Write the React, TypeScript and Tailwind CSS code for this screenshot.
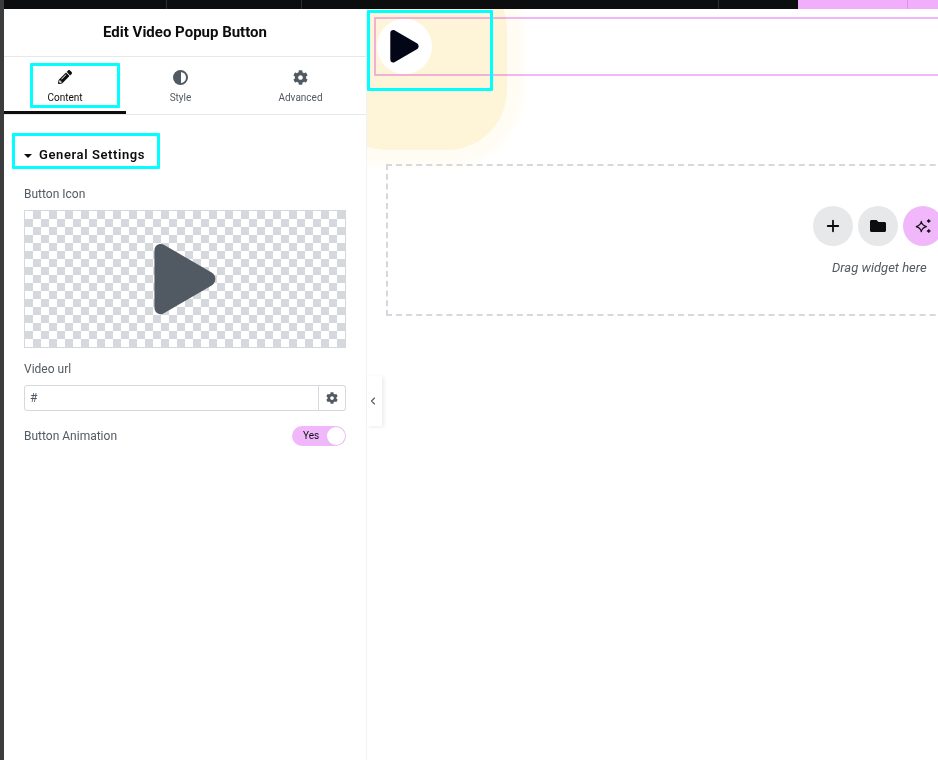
import { ChevronLeft, Plus } from 'lucide-react';
import { FaCog, FaFolder, FaPencilAlt } from 'react-icons/fa';

function Play({ className }: { className?: string }) {
  return (
    <svg viewBox="0 0 62 72" className={className} fill="currentColor">
      <path d="M0 7C0 1.5 5-1.5 10 1l48 28c5 3 5 10 0 13L10 70c-5 3-10 0-10-6z" />
    </svg>
  );
}

function Sparkle({ className }: { className?: string }) {
  return (
    <svg viewBox="0 0 16 16" className={className}>
      <path d="M6.300 3.400C6.800 6.400 7.900 7.700 11.400 8.600 7.900 9.500 6.800 10.800 6.300 13.800 5.800 10.800 4.700 9.500 1.200 8.600 4.700 7.700 5.800 6.400 6.300 3.400z" fill="none" stroke="currentColor" strokeWidth="1.100" strokeLinejoin="round" />
      <path d="M13.700 1.200v3.600M11.900 3h3.600M13.700 11.200v3.600M11.900 13h3.600" fill="none" stroke="currentColor" strokeWidth="1.300" />
    </svg>
  );
}

function Tab({ label, active, icon, width }: { label: string; active?: boolean; icon: React.ReactNode; width: string }) {
  return (
    <div className={`${width} flex flex-col items-center pt-[10px] border-b-[3px] ${active ? 'border-[#0c0d0e] text-[#0c0d0e]' : 'border-transparent text-[#515962]'}`}>
      <div className="h-[20px] flex items-center justify-center">{icon}</div>
      <span className="text-[10px] leading-[12px] mt-[5px]">{label}</span>
    </div>
  );
}

export default function App() {
  return (
    <div className="relative w-[938px] h-[760px] overflow-hidden flex bg-white font-['Roboto',sans-serif] text-[#515962]">
      <div className="w-[4px] bg-[#3c3c3c]" />

      <div className="flex-1 min-w-0 flex flex-col">
        {/* Top bar */}
        <div className="h-[9px] flex bg-[#0c0d0e]">
          <div className="w-[163px] border-r border-[#2d2f32]" />
          <div className="w-[135px] border-r border-[#2d2f32]" />
          <div className="w-[417px] border-r border-[#2d2f32]" />
          <div className="w-[79px]" />
          <div className="w-[110px] bg-[#f0aefb] border-r border-[#e08fee]" />
          <div className="flex-1 bg-[#f0aefb]" />
        </div>

        <div className="flex flex-1 min-h-0">
          {/* Panel */}
          <aside className="w-[363px] flex flex-col border-r border-[#f1f2f3] bg-white">
            <div className="h-[48px] flex items-center justify-center border-b border-[#e6e8ea]">
              <h1 className="text-[15px] font-bold text-[#0c0d0e]">Edit Video Popup Button</h1>
            </div>
            <div className="h-[58px] flex border-b border-[#e6e8ea]">
              <Tab width="w-[122px]" active label="Content" icon={<FaPencilAlt className="w-[14px] h-[14px]" />} />
              <Tab
                width="w-[109px]"
                label="Style"
                icon={
                  <span className="w-[15px] h-[15px] rounded-full border-2 border-[#515962] flex">
                    <span className="w-1/2 bg-[#515962]" />
                  </span>
                }
              />
              <Tab width="w-[131px]" label="Advanced" icon={<FaCog className="w-[15px] h-[15px]" />} />
            </div>

            <div className="px-[20px] pt-[30px]">
              <div className="flex items-center gap-[7px] text-[#0c0d0e]">
                <span className="w-0 h-0 border-x-[4px] border-x-transparent border-t-[4px] border-t-[#0c0d0e] mt-[2px]" />
                <span className="text-[13px] font-semibold tracking-[0.6px]">General Settings</span>
              </div>

              <div className="text-[12px] leading-[14px] mt-[22px]">Button Icon</div>
              <div className="mt-[9px] h-[138px] flex items-center justify-center border border-[#d5d8dc] bg-[repeating-conic-gradient(#d5d8dc_0_25%,#ffffff_0_50%)] bg-[length:16px_16px]">
                <Play className="w-[62px] h-[71px] mt-[1px] text-[#515962]" />
              </div>

              <div className="text-[12px] leading-[14px] mt-[14px]">Video url</div>
              <div className="mt-[9px] h-[26px] flex">
                <div className="flex-1 flex items-center px-[5px] border border-[#d5d8dc] rounded-l-[3px] text-[12px]">#</div>
                <div className="w-[27px] flex items-center justify-center border border-l-0 border-[#d5d8dc] rounded-r-[3px]">
                  <FaCog className="w-[12px] h-[12px]" />
                </div>
              </div>

              <div className="mt-[15px] flex items-center justify-between">
                <span className="text-[12px]">Button Animation</span>
                <div className="relative w-[54px] h-[20px] rounded-full bg-[#f0b8fb] flex items-center pl-[11px]">
                  <span className="text-[10px] text-[#0c0d0e]">Yes</span>
                  <span className="absolute right-[1px] top-[1px] w-[18px] h-[18px] rounded-full bg-white" />
                </div>
              </div>
            </div>
          </aside>

          {/* Preview */}
          <main className="relative flex-1 min-w-0 overflow-hidden bg-white">
            <div className="absolute -left-[40px] -top-[40px] w-[180px] h-[181px] rounded-[60px] bg-[#fef5d9] shadow-[0_0_10px_16px_#fffcf3]" />

            <div className="relative mt-[8px] ml-[7px] w-[600px] h-[59px] flex items-center pl-[3px]">
              <div className="absolute inset-0 border-2 border-[#f0b8fb] mix-blend-multiply" />
              <div className="w-[55px] h-[55px] rounded-full bg-white flex items-center justify-center">
                <Play className="w-[29px] h-[33px] text-[#020617]" />
              </div>
            </div>

            <div className="relative mt-[88px] ml-[19px] w-[600px] h-[152px] border-2 border-dashed border-[#d5d8dc]">
              <div className="w-[144px] ml-[425px] pt-[40px] flex flex-col">
                <div className="flex gap-[5px]">
                  <span className="w-[40px] h-[40px] rounded-full bg-[#e6e8ea] flex items-center justify-center">
                    <Plus className="w-[18px] h-[18px] text-[#0c0d0e]" strokeWidth={2.4} />
                  </span>
                  <span className="w-[40px] h-[40px] rounded-full bg-[#e6e8ea] flex items-center justify-center">
                    <FaFolder className="w-[16px] h-[16px] text-[#0c0d0e]" />
                  </span>
                  <span className="w-[40px] h-[40px] rounded-full bg-[#f0b8fb] flex items-center justify-center">
                    <Sparkle className="w-[16px] h-[16px] text-[#0c0d0e]" />
                  </span>
                </div>
                <div className="mt-[13px] ml-[19px] text-[13px] leading-[17px] italic whitespace-nowrap">Drag widget here</div>
              </div>
            </div>
          </main>
        </div>
      </div>

      {/* Panel collapse handle */}
      <div className="absolute left-[367px] top-[376px] w-[15px] h-[50px] pr-[3px] bg-white shadow-[2px_1px_4px_rgba(0,0,0,0.08)] flex items-center justify-center">
        <ChevronLeft className="w-[12px] h-[12px] text-[#515962]" strokeWidth={2.2} />
      </div>

      {/* Cyan highlight boxes */}
      <div className="absolute left-[30px] top-[63px] w-[90px] h-[45px] border-[3px] border-[#00ffff] rounded-[1px]" />
      <div className="absolute left-[12px] top-[133px] w-[148px] h-[36px] border-[3px] border-[#00ffff] rounded-[1px]" />
      <div className="absolute left-[367px] top-[10px] w-[126px] h-[81px] border-[3px] border-[#00ffff] rounded-[1px]" />
    </div>
  );
}
